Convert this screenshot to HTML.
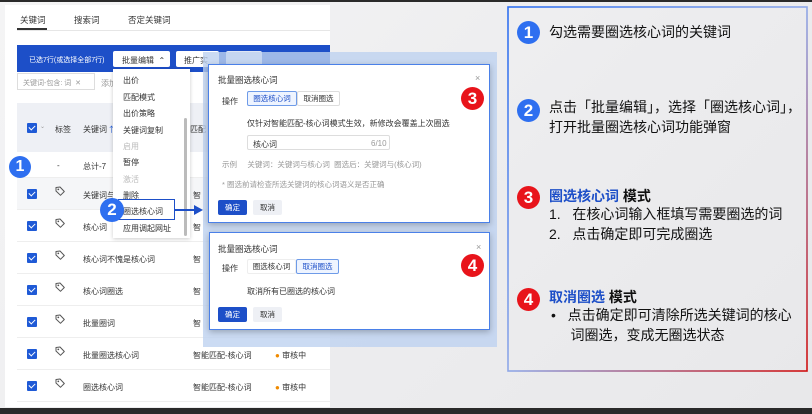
<!DOCTYPE html>
<html><head><meta charset="utf-8"><style>
*{margin:0;padding:0;box-sizing:border-box}
body{width:812px;height:414px;overflow:hidden;background:#2a2a2a;font-family:"Liberation Sans","Noto Sans CJK SC",sans-serif;position:relative}
.a{position:absolute}
.bg{left:0;top:2px;width:812px;height:406px;background:linear-gradient(135deg,#f4f4f5,#ececee 60%,#e8e8ea)}
.panel{left:5px;top:5px;width:325px;height:402px;background:#fff}
.t{font-size:8px;color:#333;white-space:nowrap}
.g{color:#999}
.cb{width:10px;height:10px;background:#1f5ad6;border-radius:1px}
.cb:after{content:"";position:absolute;left:2px;top:2px;width:5px;height:3px;border-left:1.3px solid #fff;border-bottom:1.3px solid #fff;transform:rotate(-45deg)}
.row{left:17px;width:313px;height:1px;background:#eee}
.badge{border-radius:50%;color:#fff;font-weight:bold;text-align:center;font-family:"Liberation Sans",sans-serif}
.blue{background:#2e6ff0}.red{background:#e8141b}
.dlg{background:#fff;border:1.5px solid #4a80e8;box-shadow:0 2px 6px rgba(0,0,0,.25)}
.btn{font-size:7.5px;text-align:center;border-radius:2px}
.rt{font-size:14px;color:#111;white-space:nowrap;line-height:20px}
.tag{width:10px;height:10px}
</style></head><body>
<svg width="0" height="0" style="position:absolute"><defs><symbol id="tg" viewBox="0 0 10 10"><path d="M1 1.5 L1 5 L5.5 9.3 L9.3 5.5 L5 1 Z" fill="none" stroke="#555" stroke-width="1" stroke-linejoin="round"/><circle cx="3.3" cy="3.4" r="0.9" fill="#555"/></symbol></defs></svg>
<div class="a bg"></div>
<div class="a panel"></div>
<!-- tabs -->
<div class="a t" style="left:20px;top:14px;font-size:8.5px">关键词</div>
<div class="a" style="left:17px;top:28px;width:30px;height:2px;background:#333"></div>
<div class="a t" style="left:74px;top:14px;font-size:8.5px">搜索词</div>
<div class="a t" style="left:128px;top:14px;font-size:8.5px">否定关键词</div>
<div class="a" style="left:17px;top:30px;width:313px;height:1px;background:#e6e6e6"></div>
<!-- blue bar -->
<div class="a" style="left:17px;top:45px;width:313px;height:27px;background:#1d4fc8"></div>
<div class="a t" style="left:29px;top:55px;color:#fff;font-size:7px">已选7行(或选择全部7行)</div>
<div class="a" style="left:113px;top:51px;width:57px;height:16px;background:#fff;border-radius:2px"></div>
<div class="a t" style="left:122px;top:55px">批量编辑 &nbsp;⌃</div>
<div class="a" style="left:176px;top:51px;width:43px;height:16px;background:#fff;border-radius:2px"></div>
<div class="a t" style="left:184px;top:55px">推广实</div>
<div class="a" style="left:226px;top:51px;width:36px;height:16px;background:#dfe6f4;border-radius:2px"></div>
<!-- filter -->
<div class="a" style="left:17px;top:73px;width:78px;height:17px;border:1px solid #ddd"></div>
<div class="a t g" style="left:23px;top:78px;font-size:7px">关键词-包含: 词 &nbsp;✕</div>
<div class="a t g" style="left:101px;top:78px">添加</div>
<!-- header -->
<div class="a" style="left:17px;top:103px;width:313px;height:49px;background:#eef0f5"></div>
<div class="a cb" style="left:27px;top:123px"></div>
<div class="a t g" style="left:40px;top:123px;font-size:6px">⌄</div>
<div class="a t" style="left:55px;top:124px">标签</div>
<div class="a t" style="left:83px;top:124px">关键词 <span style="color:#1f5ad6">⇅</span></div>
<div class="a t" style="left:190px;top:124px">匹配</div>
<!-- rows -->
<div class="a t" style="left:57px;top:161px">-</div>
<div class="a t" style="left:83px;top:161px">总计-7</div>
<div class="a row" style="top:177px"></div>
<div class="a" style="left:17px;top:178px;width:313px;height:31px;background:#f5f6f8"></div>
<div class="a row" style="top:209px"></div>
<div class="a row" style="top:241px"></div>
<div class="a row" style="top:273px"></div>
<div class="a row" style="top:305px"></div>
<div class="a row" style="top:337px"></div>
<div class="a row" style="top:369px"></div>
<div class="a row" style="top:401px"></div>
<div class="a cb" style="left:27px;top:189px"></div><svg class="a tag" style="left:55px;top:186px"><use href="#tg"/></svg><div class="a t" style="left:83px;top:190px">关键词与核</div><div class="a t" style="left:193px;top:190px">智</div>
<div class="a cb" style="left:27px;top:221px"></div><svg class="a tag" style="left:55px;top:218px"><use href="#tg"/></svg><div class="a t" style="left:83px;top:222px">核心词</div><div class="a t" style="left:193px;top:222px">智</div>
<div class="a cb" style="left:27px;top:253px"></div><svg class="a tag" style="left:55px;top:250px"><use href="#tg"/></svg><div class="a t" style="left:83px;top:254px">核心词不愧是核心词</div><div class="a t" style="left:193px;top:254px">智</div>
<div class="a cb" style="left:27px;top:285px"></div><svg class="a tag" style="left:55px;top:282px"><use href="#tg"/></svg><div class="a t" style="left:83px;top:286px">核心词圈选</div><div class="a t" style="left:193px;top:286px">智</div>
<div class="a cb" style="left:27px;top:317px"></div><svg class="a tag" style="left:55px;top:314px"><use href="#tg"/></svg><div class="a t" style="left:83px;top:318px">批量圈词</div><div class="a t" style="left:193px;top:318px">智</div>
<div class="a cb" style="left:27px;top:349px"></div><svg class="a tag" style="left:55px;top:346px"><use href="#tg"/></svg><div class="a t" style="left:83px;top:350px">批量圈选核心词</div><div class="a t" style="left:193px;top:350px">智能匹配-核心词</div><div class="a t" style="left:275px;top:350px"><span style="color:#f08a00">●</span> 审核中</div>
<div class="a cb" style="left:27px;top:381px"></div><svg class="a tag" style="left:55px;top:378px"><use href="#tg"/></svg><div class="a t" style="left:83px;top:382px">圈选核心词</div><div class="a t" style="left:193px;top:382px">智能匹配-核心词</div><div class="a t" style="left:275px;top:382px"><span style="color:#f08a00">●</span> 审核中</div>
<!-- dropdown -->
<div class="a" style="left:113px;top:69px;width:77px;height:169px;background:#fff;box-shadow:0 1px 4px rgba(0,0,0,.2)"></div>
<div class="a" style="left:184px;top:118px;width:3px;height:118px;background:#bbb;border-radius:2px"></div>
<div class="a t" style="left:123px;top:75px">出价</div>
<div class="a t" style="left:123px;top:92px">匹配模式</div>
<div class="a t" style="left:123px;top:108px">出价策略</div>
<div class="a t" style="left:123px;top:125px">关键词复制</div>
<div class="a t g" style="left:123px;top:141px;color:#bbb">启用</div>
<div class="a t" style="left:123px;top:157px">暂停</div>
<div class="a t g" style="left:123px;top:174px;color:#bbb">激活</div>
<div class="a t" style="left:123px;top:190px">删除</div>
<div class="a" style="left:118px;top:199px;width:57px;height:21px;border:1.5px solid #1d4fc8;background:#fff"></div>
<div class="a t" style="left:123px;top:206px">圈选核心词</div>
<div class="a t" style="left:123px;top:223px">应用调起网址</div>
<!-- badges 1,2 -->
<div class="a badge blue" style="left:9px;top:156px;width:22px;height:22px;font-size:16px;line-height:22px">1</div>
<div class="a badge blue" style="left:100px;top:198px;width:24px;height:24px;font-size:17px;line-height:24px">2</div>
<div class="a" style="left:175px;top:209px;width:20px;height:2px;background:#1d4fc8"></div>
<div class="a" style="left:194px;top:205px;border-left:9px solid #1d4fc8;border-top:5px solid transparent;border-bottom:5px solid transparent"></div>
<!-- blue overlay -->
<div class="a" style="left:203px;top:52px;width:294px;height:295px;background:rgba(190,210,240,.8)"></div>
<!-- dialog 3 -->
<div class="a dlg" style="left:208px;top:64px;width:282px;height:159px"></div>
<div class="a t" style="left:218px;top:74px;font-size:8.5px">批量圈选核心词</div>
<div class="a t g" style="left:475px;top:73px;font-size:9px">×</div>
<div class="a t" style="left:222px;top:96px">操作</div>
<div class="a btn" style="left:247px;top:91px;width:50px;height:15px;border:1px solid #6e9be8;background:#eef4ff;color:#1d4fc8;line-height:13px">圈选核心词</div>
<div class="a btn" style="left:297px;top:91px;width:43px;height:15px;border:1px solid #ddd;line-height:13px;color:#333">取消圈选</div>
<div class="a t" style="left:247px;top:118px">仅针对智能匹配-核心词模式生效，新修改会覆盖上次圈选</div>
<div class="a" style="left:247px;top:135px;width:143px;height:15px;border:1px solid #ddd;border-radius:2px"></div>
<div class="a t" style="left:253px;top:139px">核心词</div><div class="a t g" style="left:371px;top:139px">6/10</div>
<div class="a t g" style="left:222px;top:159px;font-size:7.5px">示例 &nbsp;&nbsp;&nbsp;&nbsp;关键词：关键词与核心词 &nbsp;圈选后：关键词与(核心词)</div>
<div class="a t g" style="left:222px;top:179px;font-size:7.5px">* 圈选前请检查所选关键词的核心词语义是否正确</div>
<div class="a btn" style="left:218px;top:200px;width:29px;height:15px;background:#1d4fc8;color:#fff;line-height:15px">确定</div>
<div class="a btn" style="left:253px;top:200px;width:29px;height:15px;background:#eef0f5;color:#333;line-height:15px">取消</div>
<div class="a badge red" style="left:461px;top:87px;width:23px;height:23px;font-size:17px;line-height:23px">3</div>
<!-- dialog 4 -->
<div class="a dlg" style="left:209px;top:232px;width:281px;height:98px"></div>
<div class="a t" style="left:218px;top:243px;font-size:8.5px">批量圈选核心词</div>
<div class="a t g" style="left:476px;top:242px;font-size:9px">×</div>
<div class="a t" style="left:222px;top:263px">操作</div>
<div class="a btn" style="left:247px;top:259px;width:49px;height:15px;border:1px solid #eee;line-height:13px;color:#333">圈选核心词</div>
<div class="a btn" style="left:296px;top:259px;width:43px;height:15px;border:1px solid #6e9be8;background:#eef4ff;color:#1d4fc8;line-height:13px">取消圈选</div>
<div class="a t" style="left:247px;top:286px">取消所有已圈选的核心词</div>
<div class="a btn" style="left:218px;top:307px;width:29px;height:15px;background:#1d4fc8;color:#fff;line-height:15px">确定</div>
<div class="a btn" style="left:253px;top:307px;width:29px;height:15px;background:#eef0f5;color:#333;line-height:15px">取消</div>
<div class="a badge red" style="left:461px;top:254px;width:23px;height:23px;font-size:17px;line-height:23px">4</div>
<!-- right box -->
<svg class="a" style="left:507px;top:6px" width="301" height="366"><defs><linearGradient id="gr" x1="0" y1="0" x2="1" y2="1"><stop offset="0" stop-color="#2e6ff0"/><stop offset=".5" stop-color="#8fa8e8"/><stop offset="1" stop-color="#d01010"/></linearGradient></defs><rect x="1" y="1" width="299" height="364" fill="none" stroke="url(#gr)" stroke-width="1.6"/></svg>
<div class="a badge blue" style="left:517px;top:21px;width:23px;height:23px;font-size:17px;line-height:23px">1</div>
<div class="a rt" style="left:549px;top:22px">勾选需要圈选核心词的关键词</div>
<div class="a badge blue" style="left:517px;top:99px;width:23px;height:23px;font-size:17px;line-height:23px">2</div>
<div class="a rt" style="left:549px;top:97px">点击「批量编辑」，选择「圈选核心词」，<br>打开批量圈选核心词功能弹窗</div>
<div class="a badge red" style="left:517px;top:186px;width:23px;height:23px;font-size:17px;line-height:23px">3</div>
<div class="a rt" style="left:549px;top:186px;font-weight:bold"><span style="color:#1d4fc8">圈选核心词</span> 模式</div>
<div class="a rt" style="left:549px;top:204px">1.&nbsp;&nbsp; 在核心词输入框填写需要圈选的词<br>2.&nbsp;&nbsp; 点击确定即可完成圈选</div>
<div class="a badge red" style="left:517px;top:288px;width:23px;height:23px;font-size:17px;line-height:23px">4</div>
<div class="a rt" style="left:549px;top:287px;font-weight:bold"><span style="color:#1d4fc8">取消圈选</span> 模式</div>
<div class="a rt" style="left:551px;top:305px">•&nbsp;&nbsp; 点击确定即可清除所选关键词的核心<br>&nbsp;&nbsp;&nbsp;&nbsp;&nbsp;词圈选，变成无圈选状态</div>
</body></html>
